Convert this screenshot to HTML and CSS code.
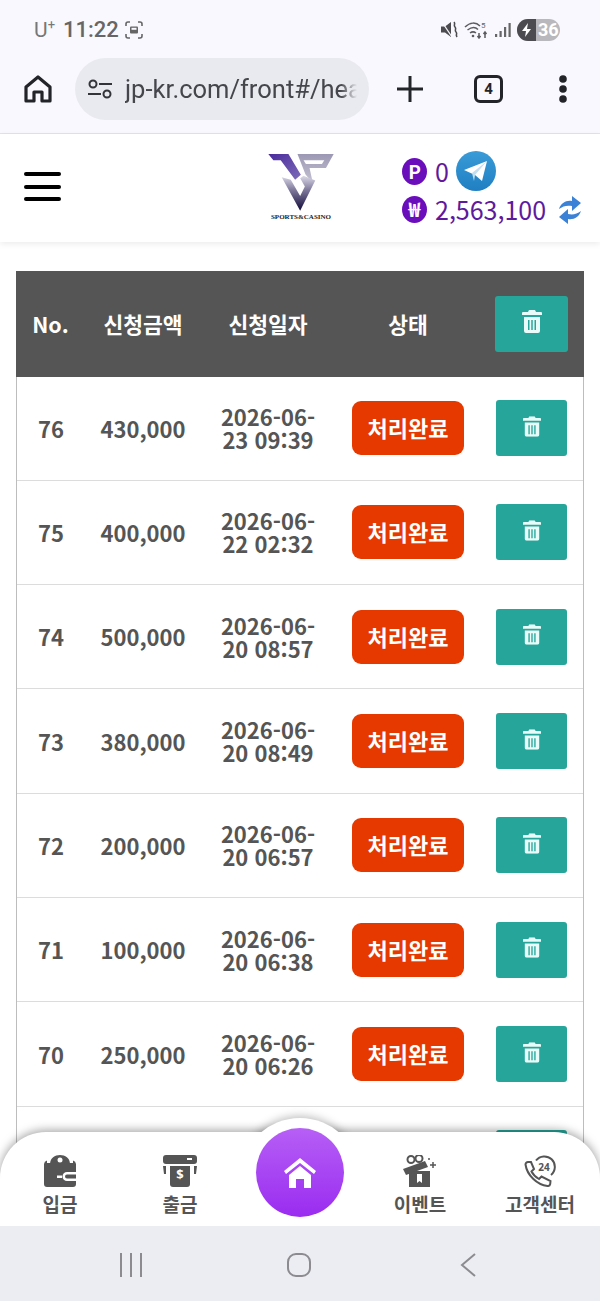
FILE: index.html
```html
<!DOCTYPE html>
<html lang="ko">
  <head>
    <meta charset="utf-8" />
    <meta name="viewport" content="width=device-width, initial-scale=1" />
    <title>출금 내역</title>
    <link rel="stylesheet" href="styles.css">
  </head>
  <body>
    <div class="phone">
      <div class="statusbar">
        <div class="status-left">
          <span class="carrier">U<sup>+</sup></span>
          <span class="clock">11:22</span>
          <svg class="shot" viewBox="0 0 18 18" width="18" height="18" fill="none" stroke="#666" stroke-width="1.6"><path d="M1 5V3a2 2 0 0 1 2-2h2M13 1h2a2 2 0 0 1 2 2v2M17 13v2a2 2 0 0 1-2 2h-2M5 17H3a2 2 0 0 1-2-2v-2"/><rect x="5" y="5.5" width="8" height="7" rx="1" fill="#666" stroke="none"/><rect x="6.5" y="6.8" width="5" height="2" fill="#f9f8fe" stroke="none"/></svg>
        </div>
        <div class="status-right">
          <svg viewBox="0 0 17 17" width="17" height="17"><path d="M0 5.500h4l6-4.500v15l-6-4.500H0z" fill="#4c4c50"/><path d="M1 1l10 15" stroke="#f9f8fe" stroke-width="1.300"/><path d="M13 1c2 2-1 3 1 5s-1 3 1 5-1 2 1 5" fill="none" stroke="#4c4c50" stroke-width="1.600"/></svg>
          <svg viewBox="0 0 25 18" width="25" height="18" fill="none" stroke="#5c5c60" stroke-width="1.500"><path d="M1 6c5-5 11-5 15-1"/><path d="M3.500 9c4-3 8-3 10.500-.5"/><path d="M6 12c2-1.500 4-1.500 6 0"/><circle cx="9" cy="15" r="1.300" fill="#5c5c60" stroke="none"/><path d="M15 12v5M13.500 15l1.500 2 1.500-2M21 17v-6M19.500 13l1.500-2 1.500 2"/><text class="wifi-five" x="17" y="7">5</text></svg>
          <svg viewBox="0 0 16 16" width="16" height="16" fill="#666"><rect x="0" y="12" width="2.200" height="3"/><rect x="4.500" y="9" width="2.200" height="6"/><rect x="9" y="5" width="2.200" height="10"/><rect x="13.500" y="1" width="2.200" height="14"/></svg>
          <div class="battery"><span class="bolt"><svg viewBox="0 0 10 14" width="10" height="14"><path d="M6 0L0 8h4l-1 6 6-8H5z" fill="#fff"/></svg></span><span class="level">36</span></div>
        </div>
      </div>

      <div class="browserbar">
        <svg class="chrome-home" viewBox="0 0 28 28" width="28" height="28" fill="none" stroke="#23232a" stroke-width="3.200" stroke-linejoin="round"><path d="M2 12L14 2l12 10v14H18v-9h-8v9H2z"/></svg>
        <div class="urlpill">
          <svg viewBox="0 0 24 20" width="24" height="20" fill="none" stroke="#33333a" stroke-width="2"><circle cx="5" cy="5" r="3.500"/><path d="M11 5h13M0 15h13"/><circle cx="19" cy="15" r="3.500"/></svg>
          <span class="urltext">jp-kr.com/front#/hea</span>
        </div>
        <svg class="chrome-plus" viewBox="0 0 28 28" width="28" height="28" stroke="#23232a" stroke-width="3"><path d="M14 1v26M1 14h26"/></svg>
        <div class="tabcount">4</div>
        <svg class="chrome-more" viewBox="0 0 8 28" width="8" height="28" fill="#23232a"><circle cx="4" cy="4" r="3.800"/><circle cx="4" cy="14" r="3.800"/><circle cx="4" cy="24" r="3.800"/></svg>
      </div>

      <div class="sitehead">
        <div class="burger"><span></span><span></span><span></span></div>
        <div class="logo">
          <svg viewBox="85 43 195 170" width="66" height="57">
            <defs>
              <linearGradient id="lgA" x1="0" y1="0" x2="1" y2="1"><stop offset="0" stop-color="#4a2a9c"/><stop offset="1" stop-color="#7d6cb8"/></linearGradient>
              <linearGradient id="lgB" x1="0" y1="0" x2="0" y2="1"><stop offset="0" stop-color="#9c98b4"/><stop offset="1" stop-color="#c4c2d2"/></linearGradient>
              <linearGradient id="lgC" x1="0" y1="0" x2="0" y2="1"><stop offset="0" stop-color="#dcdae8"/><stop offset="0.4" stop-color="#7f7a9c"/><stop offset="1" stop-color="#120a3a"/></linearGradient>
            </defs>
            <polygon points="85,43 145,43 182,105 165,120 122,62 100,62" fill="url(#lgA)"/>
            <polygon points="172,43 280,43 257,85 208,85 218,130 196,104" fill="url(#lgB)"/>
            <polygon points="190,62 252,62 245,73 197,73" fill="#fff"/>
            <polygon points="125,112 152,120 180,168 194,140 180,115 190,108 225,122 180,212" fill="url(#lgC)"/>
          </svg>
          <span class="logotext">SPORTS&amp;CASINO</span>
        </div>
        <div class="wallet">
          <div class="wallet-row first">
            <span class="coin">P</span>
            <span class="amount">0</span>
            <svg class="telegram" viewBox="0 0 40 40" width="40" height="40"><defs><linearGradient id="tg" x1="0" y1="0" x2="0" y2="1"><stop offset="0" stop-color="#3a9bd8"/><stop offset="1" stop-color="#1f7fc2"/></linearGradient></defs><circle cx="20" cy="20" r="20" fill="url(#tg)"/><path d="M8 19L31 10 26 30 19 24z" fill="#fff"/><path d="M16 22l15-12-12 14-1 6z" fill="#c4dff0"/></svg>
          </div>
          <div class="wallet-row">
            <span class="coin won">₩</span>
            <span class="amount">2,563,100</span>
            <svg class="refresh" viewBox="0 0 24 30" width="24" height="30" fill="#3b82d6"><path d="M1 14C3 8 8 5 14 6V1l9 7-9 8v-5C9 10 5 11 1 14z"/><path d="M23 16c-2 6-7 9-13 8v5l-9-7 9-8v5c5 1 9 0 13-3z"/></svg>
          </div>
        </div>
      </div>

      <div class="content">
        <div class="board">
          <div class="row headrow">
            <div>No.</div>
            <div>신청금액</div>
            <div>신청일자</div>
            <div>상태</div>
            <div><button class="delbtn big" type="button"><svg viewBox="0 0 20 23" width="20" height="23"><use href="#trash"/></svg></button></div>
          </div>
          <div class="row">
            <div>76</div><div>430,000</div><div class="date">2026-06-<br>23 09:39</div>
            <div><span class="state">처리완료</span></div>
            <div><button class="delbtn" type="button"><svg viewBox="0 0 20 23" width="18" height="21"><use href="#trash"/></svg></button></div>
          </div>
          <div class="row">
            <div>75</div><div>400,000</div><div class="date">2026-06-<br>22 02:32</div>
            <div><span class="state">처리완료</span></div>
            <div><button class="delbtn" type="button"><svg viewBox="0 0 20 23" width="18" height="21"><use href="#trash"/></svg></button></div>
          </div>
          <div class="row">
            <div>74</div><div>500,000</div><div class="date">2026-06-<br>20 08:57</div>
            <div><span class="state">처리완료</span></div>
            <div><button class="delbtn" type="button"><svg viewBox="0 0 20 23" width="18" height="21"><use href="#trash"/></svg></button></div>
          </div>
          <div class="row">
            <div>73</div><div>380,000</div><div class="date">2026-06-<br>20 08:49</div>
            <div><span class="state">처리완료</span></div>
            <div><button class="delbtn" type="button"><svg viewBox="0 0 20 23" width="18" height="21"><use href="#trash"/></svg></button></div>
          </div>
          <div class="row">
            <div>72</div><div>200,000</div><div class="date">2026-06-<br>20 06:57</div>
            <div><span class="state">처리완료</span></div>
            <div><button class="delbtn" type="button"><svg viewBox="0 0 20 23" width="18" height="21"><use href="#trash"/></svg></button></div>
          </div>
          <div class="row">
            <div>71</div><div>100,000</div><div class="date">2026-06-<br>20 06:38</div>
            <div><span class="state">처리완료</span></div>
            <div><button class="delbtn" type="button"><svg viewBox="0 0 20 23" width="18" height="21"><use href="#trash"/></svg></button></div>
          </div>
          <div class="row">
            <div>70</div><div>250,000</div><div class="date">2026-06-<br>20 06:26</div>
            <div><span class="state">처리완료</span></div>
            <div><button class="delbtn" type="button"><svg viewBox="0 0 20 23" width="18" height="21"><use href="#trash"/></svg></button></div>
          </div>
          <div class="row">
            <div></div><div></div><div></div><div></div>
            <div><button class="delbtn" type="button"></button></div>
          </div>
        </div>

        <div class="tabbar">
          <div class="bump"></div>
          <div class="tab">
            <svg viewBox="0 0 32 32" width="32" height="32" fill="#555"><path d="M6 9C6 3 11 0 16 0s10 3 10 9z"/><path d="M3 5.500V8h26V5.500a4 4 0 0 1 3 3.500v8H23a4.500 4.500 0 0 0 0 9h9v3a3 3 0 0 1-3 3H3a3 3 0 0 1-3-3V9a4 4 0 0 1 3-3.500z"/><path d="M32 19.500h-9a2 2 0 0 0 0 4h9z"/><circle cx="16" cy="5" r="2.500" fill="#fff"/><rect x="13" y="20.500" width="5" height="2.500" fill="#fff"/></svg>
            <span>입금</span>
          </div>
          <div class="tab">
            <svg viewBox="0 0 34 32" width="34" height="32" fill="#555"><rect x="0" y="0" width="34" height="9" rx="3"/><rect x="24" y="3" width="5" height="2" fill="#fff"/><path d="M0 11h3v8H1zM31 11h3l-1 8h-2z"/><path d="M7 11h20v18a3 3 0 0 1-3 3H10a3 3 0 0 1-3-3z"/><text class="dollar" x="17" y="24">$</text></svg>
            <span>출금</span>
          </div>
          <a class="homebtn" href="#"><svg viewBox="0 0 32 30" width="32" height="30" fill="#fff"><path d="M16 0L0 13l2 3L16 5l14 11 2-3z"/><path d="M5 17L16 8l11 9v13h-7v-9h-8v9H5z"/></svg></a>
          <div class="tab">
            <svg viewBox="0 0 34 32" width="34" height="32" fill="#555"><path d="M6 16h21v16H6z"/><path d="M0 14L22 6l3 6-22 8z"/><circle cx="8" cy="4.500" r="3.500" fill="none" stroke="#555" stroke-width="2"/><circle cx="16" cy="3.500" r="3.500" fill="none" stroke="#555" stroke-width="2"/><path d="M14 19h5v9l-2.500-2-2.500 2z" fill="#fff"/><path d="M30 7v6M27 10h6" stroke="#555" stroke-width="1.500"/><circle cx="26" cy="4" r="1"/></svg>
            <span>이벤트</span>
          </div>
          <div class="tab">
            <svg viewBox="0 0 32 32" width="32" height="32" fill="none" stroke="#555" stroke-width="2"><path d="M26.500 26l-.3 3a2.500 2.500 0 0 1-2.700 2C13 30 3 20 1.500 9.500A2.500 2.500 0 0 1 4 7h3l3 7-2.500 2.500c1.500 3 4 5.500 7.500 7.500l2.500-2.500z"/><path d="M12 5.500A10.500 10.500 0 1 1 27 20"/><text class="twentyfour" x="20" y="16">24</text></svg>
            <span>고객센터</span>
          </div>
        </div>
      </div>

      <div class="navbar">
        <svg viewBox="0 0 24 24" width="24" height="24" stroke="#8b8b90" stroke-width="2"><path d="M2 0v24M12 0v24M22 0v24"/></svg>
        <svg viewBox="0 0 24 24" width="24" height="24" fill="none" stroke="#8b8b90" stroke-width="2"><rect x="1" y="1" width="22" height="22" rx="8"/></svg>
        <svg class="nav-back" viewBox="0 0 16 24" width="16" height="24" fill="none" stroke="#8b8b90" stroke-width="2"><path d="M15 1L2 12l13 11"/></svg>
      </div>
    </div>

    <svg class="defs" width="0" height="0">
      <symbol id="trash" viewBox="0 0 20 23">
        <path d="M7 0h6l1 2h5a1 1 0 0 1 1 1v2H0V3a1 1 0 0 1 1-1h5z" fill="#e9fbf8"/>
        <path fill-rule="evenodd" d="M2 7h16v14a2 2 0 0 1-2 2H4a2 2 0 0 1-2-2zM6 10v10h1.500V10zM9.250 10v10h1.500V10zM12.500 10v10H14V10z" fill="#e9fbf8"/>
      </symbol>
    </svg>
  </body>
</html>
```

FILE: styles.css
```css
* {
  box-sizing: border-box;
}

html,
body {
  margin: 0;
  height: 100%;
  background: #fff;
  font-family: "Noto Sans CJK KR", "Noto Sans", sans-serif;
}

.defs {
  position: absolute;
}

.phone {
  width: 600px;
  height: 1301px;
  display: flex;
  flex-direction: column;
  overflow: hidden;
}

/* android status bar */
.statusbar {
  height: 57px;
  padding: 2px 40px 0 34px;
  background: #f9f8fe;
  display: flex;
  justify-content: space-between;
  align-items: center;
  color: #666;
}

.status-left {
  display: flex;
  align-items: center;
}

.carrier {
  font-family: Roboto, sans-serif;
  font-size: 21px;
  color: #777;
  width: 29px;
}

.carrier sup {
  font-size: 13px;
  line-height: 0;
}

.clock {
  font-family: Roboto, sans-serif;
  font-size: 22px;
  font-weight: 500;
  width: 62px;
}

.status-right {
  display: flex;
  align-items: center;
  gap: 6px;
}

.wifi-five {
  font-family: Roboto, sans-serif;
  font-size: 8px;
  fill: #666;
  stroke: none;
}

.battery {
  width: 43px;
  height: 22px;
  border-radius: 11px;
  background: #b9b9bd;
  display: flex;
  overflow: hidden;
  align-items: center;
  font-family: Roboto, sans-serif;
  font-size: 18px;
  font-weight: 700;
  color: #fff;
}

.bolt {
  width: 19px;
  height: 22px;
  background: #4c4c50;
  display: flex;
  align-items: center;
  justify-content: center;
}

.level {
  margin-left: 2px;
}

/* browser toolbar */
.browserbar {
  height: 77px;
  padding-bottom: 12px;
  background: #f9f8fe;
  border-bottom: 1px solid #e4e3ea;
  display: flex;
  align-items: center;
}

.chrome-home {
  margin-left: 24px;
}

.urlpill {
  width: 294px;
  height: 62px;
  margin-left: 23px;
  border-radius: 31px;
  background: #e9e9f0;
  display: flex;
  align-items: center;
  padding-left: 13px;
}

.urltext {
  width: 232px;
  margin-left: 13px;
  overflow: hidden;
  white-space: nowrap;
  font-family: Roboto, sans-serif;
  font-size: 25.500px;
  color: #45454c;
  -webkit-mask-image: linear-gradient(to right, #000 93%, transparent);
  mask-image: linear-gradient(to right, #000 93%, transparent);
}

.chrome-plus {
  margin-left: 27px;
}

.tabcount {
  width: 29px;
  height: 28px;
  margin-left: 50px;
  border: 3px solid #23232a;
  border-radius: 6px;
  font-family: Roboto, sans-serif;
  font-size: 15px;
  font-weight: 700;
  color: #23232a;
  display: flex;
  align-items: center;
  justify-content: center;
}

.chrome-more {
  margin-left: 56px;
}

/* site header */
.sitehead {
  height: 108px;
  flex-shrink: 0;
  background: #fff;
  box-shadow: 0 2px 6px rgba(0, 0, 0, 0.08);
  display: flex;
  position: relative;
  z-index: 2;
}

.burger {
  width: 37px;
  margin: 38px 0 0 24px;
  display: flex;
  flex-direction: column;
  gap: 8.500px;
}

.burger span {
  height: 4px;
  border-radius: 2px;
  background: #000;
}

.logo {
  width: 66px;
  margin: 20px 0 0 207px;
  display: flex;
  flex-direction: column;
  align-items: center;
}

.logotext {
  font-family: "Liberation Serif", serif;
  font-size: 7px;
  font-weight: 700;
  color: #222;
  white-space: nowrap;
  line-height: 9px;
  margin-top: 2px;
}

.wallet {
  margin: 17px 0 0 68px;
  display: flex;
  flex-direction: column;
}

.wallet-row {
  height: 37px;
  display: flex;
  align-items: center;
}

.wallet-row.first {
  height: 40px;
}

.coin {
  width: 25px;
  height: 27px;
  border-radius: 50%;
  background: #6a0dbb;
  color: #fff;
  font-size: 19px;
  font-weight: 700;
  line-height: 26px;
  text-align: center;
}

.coin.won {
  font-size: 20px;
}

.amount {
  margin-left: 8px;
  font-size: 25px;
  line-height: 37px;
  color: #5e1a9c;
}

.telegram {
  margin-left: 7px;
}

.refresh {
  margin-left: 12px;
}

/* list */
.content {
  flex: 1;
  padding: 29px 16px 0;
  background: #fff;
  position: relative;
  overflow: hidden;
}

.board {
  border-left: 1px solid #bdbdbd;
  border-right: 1px solid #bdbdbd;
}

.row {
  height: 104.330px;
  display: grid;
  grid-template-columns: 68px 116px 134px 146px 101px;
  align-items: center;
  justify-items: center;
  border-bottom: 1px solid #dcdcdc;
  font-size: 22px;
  font-weight: 600;
  line-height: 23px;
  color: #555;
}

.headrow {
  height: 105.500px;
  margin: 0 -1px;
  grid-template-columns: 69px 116px 134px 146px 101px;
  background: #555;
  color: #fff;
  font-size: 21.500px;
  border-bottom: none;
}

.date {
  text-align: center;
}

.state {
  display: block;
  width: 112px;
  height: 54px;
  border-radius: 9px;
  background: #e63900;
  color: #fff;
  font-size: 22px;
  line-height: 52px;
  text-align: center;
}

.delbtn {
  width: 71px;
  height: 56px;
  padding: 0 0 4px;
  border: none;
  border-radius: 3px;
  background: #26a69a;
  display: flex;
  align-items: center;
  justify-content: center;
}

.delbtn.big {
  width: 73px;
}

/* bottom tabs */
.tabbar {
  position: absolute;
  left: 0;
  right: 0;
  bottom: 0;
  height: 94px;
  padding: 23px 0 0;
  background: #fff;
  border-radius: 46px 46px 0 0;
  box-shadow: 0 -2px 10px rgba(0, 0, 0, 0.35);
  display: flex;
  z-index: 3;
}

.bump {
  position: absolute;
  left: 240px;
  top: -14px;
  width: 120px;
  height: 120px;
  border-radius: 50%;
  background: #fff;
  box-shadow: 0 -2px 8px rgba(0, 0, 0, 0.25);
  clip-path: inset(-12px -12px 106px -12px);
}

.tab {
  position: relative;
  width: 120px;
  display: flex;
  flex-direction: column;
  align-items: center;
  font-size: 19px;
  font-weight: 600;
  line-height: 22px;
  color: #555;
  gap: 6px;
}

.homebtn {
  position: relative;
  width: 88px;
  height: 89px;
  margin: -27px 16px 0;
  border-radius: 50%;
  background: linear-gradient(#b65ff6, #9a2cf0);
  display: flex;
  align-items: center;
  justify-content: center;
}

.dollar {
  font-family: "Noto Sans", sans-serif;
  font-size: 13px;
  font-weight: 700;
  fill: #fff;
  text-anchor: middle;
}

.twentyfour {
  font-family: "Noto Sans", sans-serif;
  font-size: 10px;
  font-weight: 700;
  fill: #555;
  stroke: none;
  text-anchor: middle;
}

/* android nav */
.navbar {
  height: 75px;
  flex-shrink: 0;
  background: #ecedf2;
  display: flex;
  align-items: center;
  padding-top: 3px;
  padding-left: 119px;
  gap: 144px;
}

.nav-back {
  margin-left: 5px;
}
```
